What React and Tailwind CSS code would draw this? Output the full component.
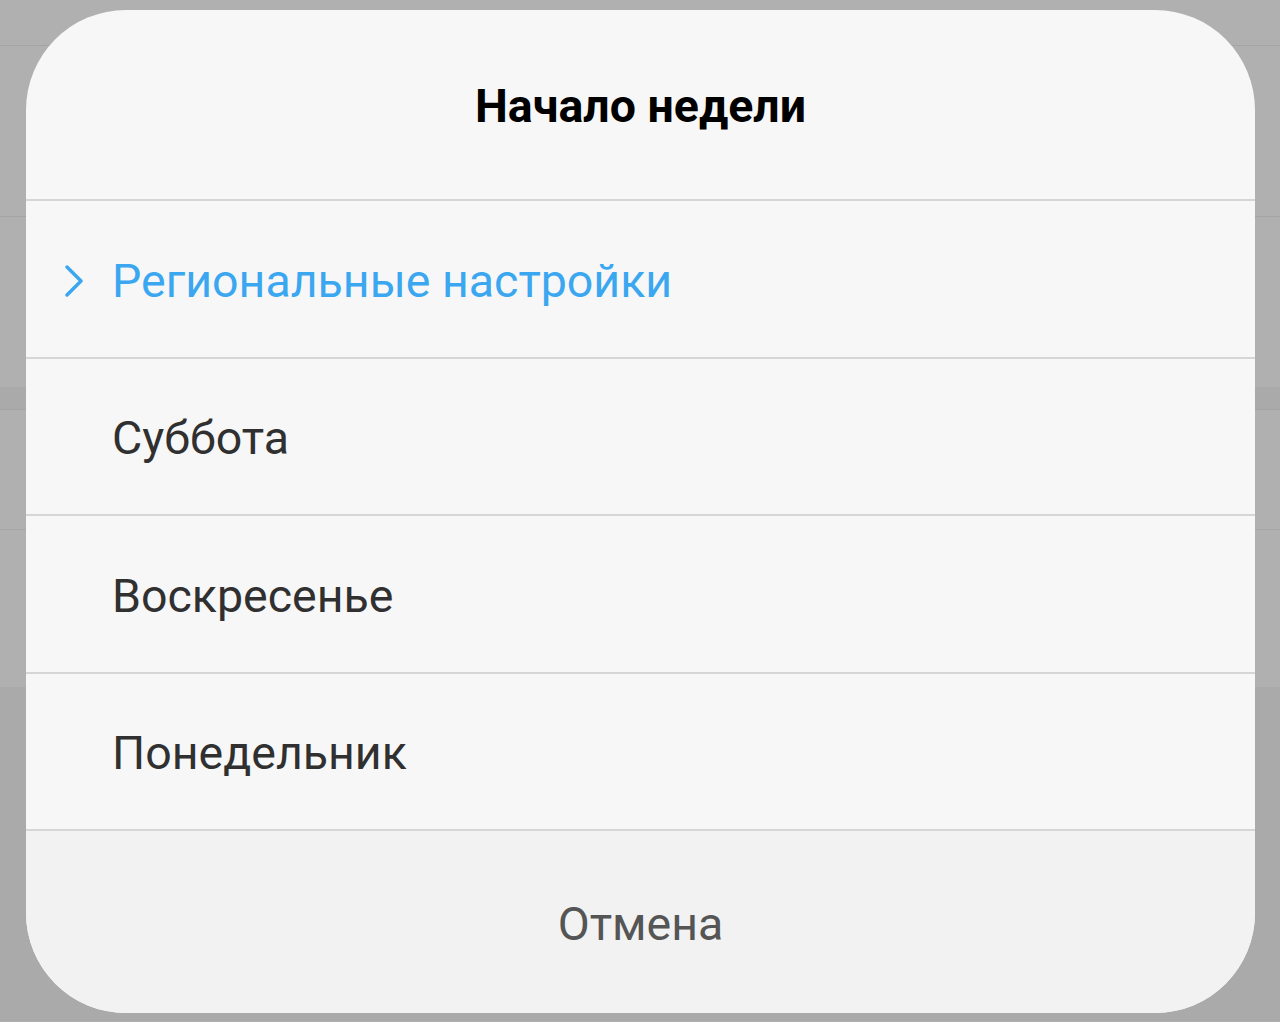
import React from 'react';

const OPTIONS = [
  { id: 'region', label: 'Региональные настройки', active: true },
  { id: 'sat', label: 'Суббота' },
  { id: 'sun', label: 'Воскресенье' },
  { id: 'mon', label: 'Понедельник' },
];

const Chevron = () => (
  <svg width="20" height="32" viewBox="0 0 20 32" fill="none" className="shrink-0">
    <polyline points="3,2 17,16 3,30" stroke="#3ba7f0" strokeWidth="3.4" strokeLinecap="round" strokeLinejoin="round" />
  </svg>
);

export default function App() {
  return (
    <div className="relative h-[1022px] w-[1280px] overflow-hidden bg-[#b0b0b0] font-['Roboto',sans-serif]">
      {/* page behind the scrim */}
      <div className="flex flex-col">
        <div className="h-[46px] border-b border-[#a4a4a4]" />
        <div className="h-[171px] border-b border-[#a4a4a4]" />
        <div className="h-[170px]" />
        <div className="h-[23px] border-b border-[#a4a4a4] bg-[#aaaaaa]" />
        <div className="h-[120px] border-b border-[#a6a6a6]" />
        <div className="h-[157px]" />
        <div className="h-[334px] bg-[#aaaaaa]" />
      </div>

      {/* dialog */}
      <div className="absolute left-[26px] top-[10px] flex h-[1003px] w-[1229px] flex-col overflow-hidden rounded-[100px] bg-[#f7f7f7]">
        <div className="flex h-[191px] shrink-0 items-center justify-center border-b-2 border-[#d6d6d6] pt-[4px]">
          <h2 className="text-[46.5px] font-bold leading-none text-black">Начало недели</h2>
        </div>

        {OPTIONS.map((opt) => (
          <div
            key={opt.id}
            className="flex h-[157.5px] shrink-0 items-center border-b-2 border-[#d6d6d6] pt-[4px]"
          >
            <div className="flex w-[86px] justify-end pr-[28px]">
              {opt.active && <Chevron />}
            </div>
            <span
              className={
                opt.active
                  ? 'text-[46.5px] leading-none text-[#3ba7f0]'
                  : 'text-[46.5px] leading-none text-[#303030]'
              }
            >
              {opt.label}
            </span>
          </div>
        ))}

        <div className="flex flex-1 items-center justify-center bg-[#f2f2f2] pt-[4px]">
          <span className="text-[46.5px] leading-none text-[#555555]">Отмена</span>
        </div>
      </div>
    </div>
  );
}
